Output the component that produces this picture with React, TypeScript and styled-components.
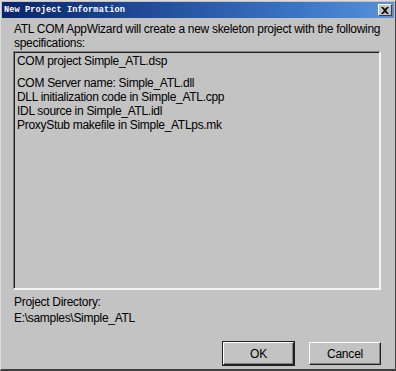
import React from 'react';
import styled, { createGlobalStyle } from 'styled-components';

const GlobalStyle = createGlobalStyle`
  html, body {
    margin: 0;
    padding: 0;
    background: #c0c0c0;
  }
`;

const Window = styled.div`
  width: 396px;
  height: 371px;
  box-sizing: border-box;
  display: flex;
  flex-direction: column;
  background: #c3c3c3;
  border-top: 1px solid #dcdcdc;
  border-left: 1px solid #dcdcdc;
  border-right: 1px solid #404040;
  border-bottom: 2px solid #404040;
  font-family: 'Liberation Sans', Arial, sans-serif;
  font-size: 12px;
  letter-spacing: -0.3px;
  color: #000;
`;

const TitleBar = styled.div`
  height: 16px;
  margin: 1px 1px 0 1px;
  display: flex;
  align-items: center;
  justify-content: space-between;
  padding: 0 2px 0 2px;
  background: linear-gradient(to right, #0a246a, #3a74c4 75%, #5a92d8);
`;

const TitleText = styled.span`
  font-family: 'Liberation Mono', monospace;
  font-size: 8.6px;
  font-weight: bold;
  color: #fff;
  letter-spacing: 0.1px;
`;

const CloseButton = styled.div`
  width: 14px;
  height: 12px;
  box-sizing: border-box;
  background: #c3c3c3;
  border-top: 1px solid #fff;
  border-left: 1px solid #fff;
  border-right: 1px solid #404040;
  border-bottom: 1px solid #404040;
  display: flex;
  align-items: center;
  justify-content: center;
`;

const Body = styled.div`
  flex: 1;
  display: flex;
  flex-direction: column;
  padding: 4px 14px 4px 12px;
`;

const Intro = styled.div`
  line-height: 14px;
  margin-left: 1px;
`;

const ListBox = styled.div`
  margin-top: 1px;
  height: 239px;
  box-sizing: border-box;
  border-top: 1px solid #808080;
  border-left: 1px solid #808080;
  border-right: 2px solid #f4f4f4;
  border-bottom: 2px solid #f4f4f4;
  box-shadow: inset 1px 1px 0 #202020;
  padding: 2px 3px;
`;

const ListLine = styled.div<{ $gap?: boolean }>`
  line-height: 14px;
  min-height: 14px;
  margin-top: ${(p) => (p.$gap ? '8px' : '0')};
`;

const DirLabel = styled.div`
  margin-top: 5px;
  line-height: 14px;
  margin-left: 1px;
`;

const DirValue = styled.div`
  margin-top: 2px;
  line-height: 14px;
  margin-left: 1px;
`;

const ButtonRow = styled.div`
  margin-top: auto;
  display: flex;
  justify-content: flex-end;
  gap: 15px;
`;

const Button = styled.button<{ $default?: boolean }>`
  width: ${(p) => (p.$default ? '71px' : '72px')};
  height: 23px;
  box-sizing: border-box;
  background: #c3c3c3;
  font-family: 'Liberation Sans', Arial, sans-serif;
  font-size: 12px;
  letter-spacing: -0.2px;
  color: #000;
  padding: 0;
  border-top: 1px solid #fff;
  border-left: 1px solid #fff;
  border-right: 1px solid #202020;
  border-bottom: 1px solid #202020;
  box-shadow: ${(p) =>
    p.$default
      ? '0 0 0 1px #202020, inset -1px -1px 0 #808080'
      : 'inset -1px -1px 0 #808080'};
`;

const specs: { text: string; gap?: boolean }[] = [
  { text: 'COM project Simple_ATL.dsp' },
  { text: 'COM Server name: Simple_ATL.dll', gap: true },
  { text: 'DLL initialization code in Simple_ATL.cpp' },
  { text: 'IDL source in Simple_ATL.idl' },
  { text: 'ProxyStub makefile in Simple_ATLps.mk' },
];

export default function App() {
  return (
    <>
      <GlobalStyle />
      <Window>
        <TitleBar>
          <TitleText>New Project Information</TitleText>
          <CloseButton>
            <svg width="8" height="7" viewBox="0 0 8 7">
              <path d="M0 0h2l2 2 2-2h2L5 3.5 8 7H6L4 5 2 7H0l3-3.5z" fill="#000" />
            </svg>
          </CloseButton>
        </TitleBar>
        <Body>
          <Intro>
            ATL COM AppWizard will create a new skeleton project with the following
            specifications:
          </Intro>
          <ListBox>
            {specs.map((s) => (
              <ListLine key={s.text} $gap={s.gap}>
                {s.text}
              </ListLine>
            ))}
          </ListBox>
          <DirLabel>Project Directory:</DirLabel>
          <DirValue>E:\samples\Simple_ATL</DirValue>
          <ButtonRow>
            <Button $default>OK</Button>
            <Button>Cancel</Button>
          </ButtonRow>
        </Body>
      </Window>
    </>
  );
}
